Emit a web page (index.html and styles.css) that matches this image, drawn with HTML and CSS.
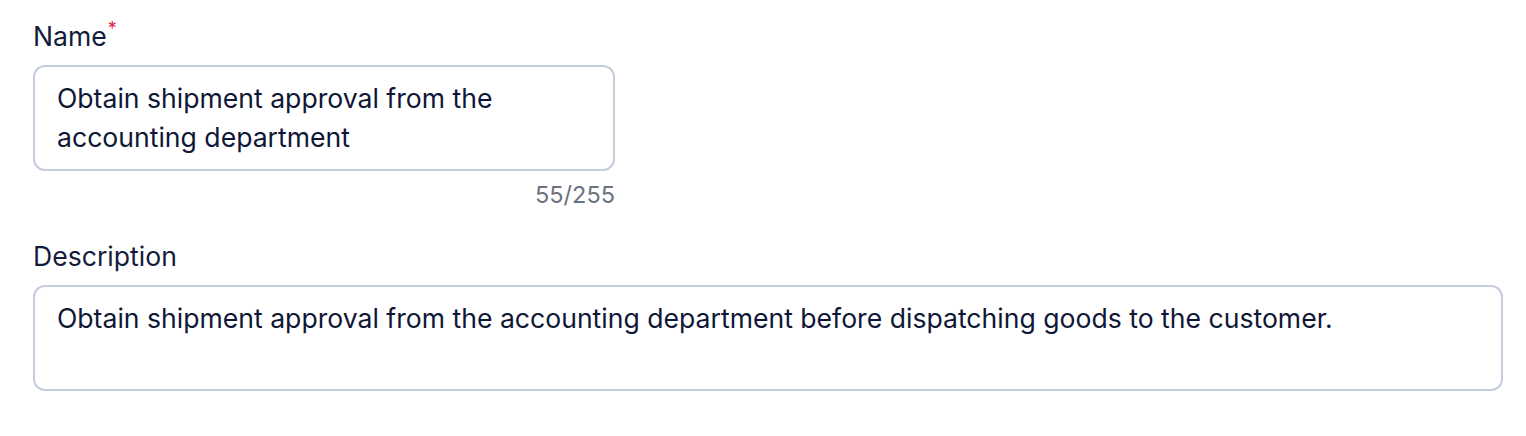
FILE: index.html
```html
<!DOCTYPE html>
<html lang="en">
<head>
<meta charset="utf-8">
<title>Task form</title>
<link rel="stylesheet" href="styles.css">
</head>
<body>
<form class="form">
  <div class="field field-name">
    <label class="label">Name<span class="req">*</span></label>
    <div class="control">Obtain shipment approval from the accounting department</div>
    <div class="counter">55/255</div>
  </div>
  <div class="field field-desc">
    <label class="label">Description</label>
    <div class="control">Obtain shipment approval from the accounting department before dispatching goods to the customer.</div>
  </div>
</form>
</body>
</html>
```
FILE: styles.css
```css
* { box-sizing: border-box; }
html, body { margin: 0; background: #ffffff; }
body {
  font-family: Inter, "Noto Sans", "Liberation Sans", sans-serif;
  color: #111a3b;
  padding: 20px 23px 0 33px;
}
.form { display: flex; flex-direction: column; }
.field { display: flex; flex-direction: column; }
.field-name { width: 582px; }
.label {
  font-size: 26.6px;
  line-height: 32px;
  color: #141c3c;
  margin-bottom: 13px;
}
.req {
  color: #e11d48;
  font-size: 18px;
  vertical-align: top;
  line-height: 18px;
  margin-left: 1px;
}
.control {
  border: 2px solid #c5ccda;
  border-radius: 12px;
  padding: 12px 22px;
  font-size: 26.6px;
  line-height: 39px;
  min-height: 106px;
  color: #0f1736;
}
.counter {
  align-self: flex-end;
  font-size: 23.5px;
  line-height: 28px;
  color: #6b7280;
  margin-top: 10px;
}
.field-desc { margin-top: 31px; }
```
